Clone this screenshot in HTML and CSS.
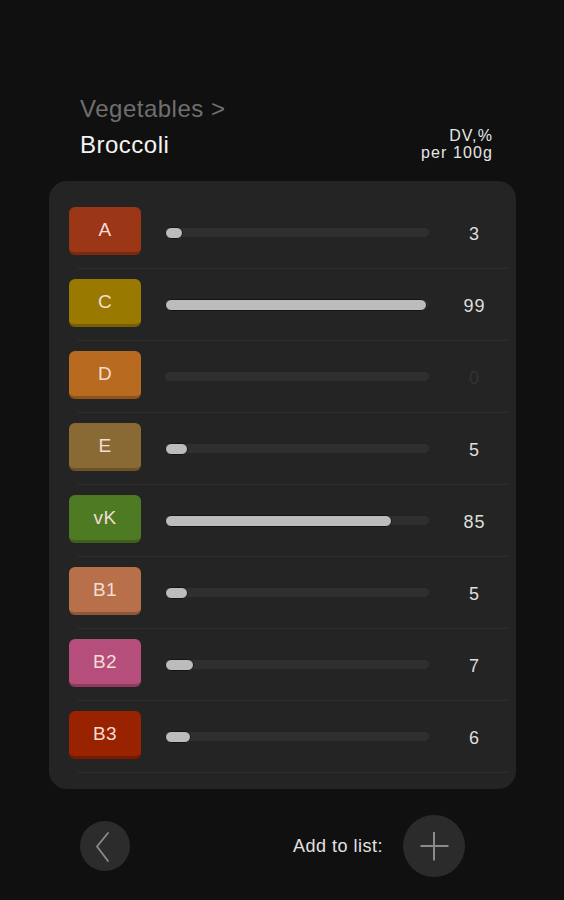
FILE: index.html
```html
<!DOCTYPE html>
<html>
  <head>
    <meta charset="utf-8">
    <title>Broccoli</title>
    <link rel="stylesheet" href="styles.css">
  </head>
  <body>
    <div class="header">
      <div class="titles">
        <div class="crumb">Vegetables &gt;</div>
        <div class="name">Broccoli</div>
      </div>
      <div class="unit">
        <div>DV,%</div>
        <div>per 100g</div>
      </div>
    </div>

    <div class="card">
      <div class="row">
        <div class="badge vA">A</div>
        <div class="track"><div class="fill" style="width:18px"></div></div>
        <div class="num">3</div>
      </div>
      <div class="row">
        <div class="badge vC">C</div>
        <div class="track"><div class="fill" style="width:262px"></div></div>
        <div class="num">99</div>
      </div>
      <div class="row">
        <div class="badge vD">D</div>
        <div class="track"></div>
        <div class="num zero">0</div>
      </div>
      <div class="row">
        <div class="badge vE">E</div>
        <div class="track"><div class="fill" style="width:23px"></div></div>
        <div class="num">5</div>
      </div>
      <div class="row">
        <div class="badge vK">vK</div>
        <div class="track"><div class="fill" style="width:227px"></div></div>
        <div class="num">85</div>
      </div>
      <div class="row">
        <div class="badge vB1">B1</div>
        <div class="track"><div class="fill" style="width:23px"></div></div>
        <div class="num">5</div>
      </div>
      <div class="row">
        <div class="badge vB2">B2</div>
        <div class="track"><div class="fill" style="width:29px"></div></div>
        <div class="num">7</div>
      </div>
      <div class="row">
        <div class="badge vB3">B3</div>
        <div class="track"><div class="fill" style="width:26px"></div></div>
        <div class="num">6</div>
      </div>
    </div>

    <div class="footer">
      <div class="back">
        <svg width="50" height="50" viewBox="0 0 50 50">
          <path d="M28 12 L17 25.5 L28 40" fill="none" stroke="#8c8c8c" stroke-width="1.8" stroke-linecap="round" stroke-linejoin="round"/>
        </svg>
      </div>
      <div class="spacer"></div>
      <div class="addtxt">Add to list:</div>
      <div class="add">
        <svg width="62" height="62" viewBox="0 0 62 62">
          <path d="M17.5 31 H45.5 M31 17 V45.5" fill="none" stroke="#8a8a8a" stroke-width="2"/>
        </svg>
      </div>
    </div>
  </body>
</html>
```

FILE: styles.css
```css
body {
  margin: 0;
  background-color: #101010;
  font-family: "Liberation Sans", Arial, sans-serif;
  width: 564px;
  height: 900px;
}

.header {
  display: flex;
  justify-content: space-between;
  align-items: flex-end;
  padding: 91px 71px 0 80px;
}
.crumb, .name {
  font-size: 24px;
  line-height: 36px;
  letter-spacing: 0.5px;
}
.crumb {
  color: #6f6f6f;
}
.name {
  color: #f4f4f4;
}
.unit {
  font-size: 16px;
  line-height: 17px;
  letter-spacing: 1.1px;
  color: #e6e6e6;
  text-align: right;
  padding-bottom: 2px;
}

.card {
  margin: 18px 48px 0 49px;
  background-color: #242424;
  border-radius: 18px;
  padding: 16px 8px 16px 29px;
}
.row {
  display: flex;
  align-items: center;
  height: 71px;
  border-bottom: solid #2e2e2e 1px;
}
.badge {
  box-sizing: border-box;
  width: 72px;
  height: 48px;
  margin-left: -9px;
  margin-bottom: 3px;
  border-radius: 6px;
  border-bottom: solid rgba(0,0,0,0.22) 3px;
  color: #f3ddd3;
  font-size: 19px;
  line-height: 46px;
  text-align: center;
  letter-spacing: 0.5px;
}
.vA { background-color: #9b3617; }
.vC { background-color: #9a7900; }
.vD { background-color: #b86b20; }
.vE { background-color: #8a6a34; }
.vK { background-color: #4f7a24; }
.vB1 { background-color: #b8704a; }
.vB2 { background-color: #b54e7b; }
.vB3 { background-color: #992200; }

.track {
  display: flex;
  align-items: center;
  width: 264px;
  height: 9px;
  margin-left: 24px;
  border-radius: 5px;
  background-color: #2f2f2f;
}
.fill {
  box-sizing: border-box;
  height: 12px;
  border-radius: 6px;
  border: solid #141414 1px;
  background-color: #bcbcbc;
  flex-shrink: 0;
}
.num {
  flex: 1;
  padding: 3px 0 0 12px;
  text-align: center;
  font-size: 18px;
  letter-spacing: 1px;
  color: #dedede;
}
.zero {
  color: #333333;
}

.footer {
  display: flex;
  align-items: center;
  height: 62px;
  margin-top: 26px;
  padding: 0 99px 0 80px;
}
.back {
  width: 50px;
  height: 50px;
  border-radius: 50%;
  background-color: #2c2c2c;
}
.spacer {
  flex: 1;
}
.addtxt {
  font-size: 18px;
  letter-spacing: 0.5px;
  color: #e2e2e2;
  margin-right: 20px;
}
.add {
  width: 62px;
  height: 62px;
  border-radius: 50%;
  background-color: #2b2b2b;
}
.back svg, .add svg {
  display: block;
}
```
